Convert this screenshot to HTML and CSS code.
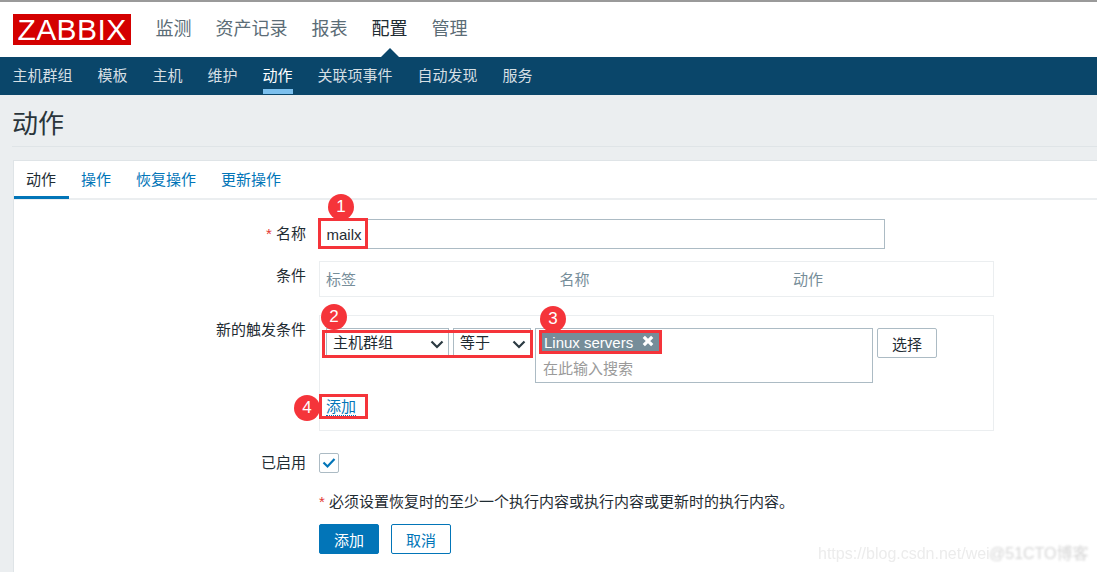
FILE: index.html
```html
<!DOCTYPE html>
<html>
<head>
    <meta charset="utf-8">
    <meta name="viewport" content="width=device-width, initial-scale=1">
    <title>动作</title>
    <link rel="stylesheet" href="styles.css">
</head>
<body>
    <div class="page">
        <header class="topbar">
            <div class="logo">ZABBIX</div>
            <nav class="mainnav">
                <a>监测</a>
                <a>资产记录</a>
                <a>报表</a>
                <a class="current">配置</a>
                <a>管理</a>
            </nav>
        </header>
        <nav class="subnav">
            <a>主机群组</a>
            <a>模板</a>
            <a>主机</a>
            <a>维护</a>
            <a class="current">动作</a>
            <a>关联项事件</a>
            <a>自动发现</a>
            <a>服务</a>
        </nav>
        <main class="content">
            <h1 class="title">动作</h1>
            <section class="card">
                <div class="tabs">
                    <a class="current">动作</a>
                    <a>操作</a>
                    <a>恢复操作</a>
                    <a>更新操作</a>
                </div>
                <form class="form">
                    <div class="row row-name">
                        <label class="label"><span class="req">*</span> 名称</label>
                        <div class="textbox">mailx</div>
                    </div>
                    <div class="row row-cond">
                        <label class="label">条件</label>
                        <div class="condtable">
                            <span>标签</span>
                            <span>名称</span>
                            <span>动作</span>
                        </div>
                    </div>
                    <div class="row row-trigger">
                        <label class="label">新的触发条件</label>
                        <div class="triggerbox">
                            <div class="triggerline">
                                <div class="dropdown dropdown-type">主机群组
                                    <svg class="chev" width="14" height="9" viewBox="0 0 14 9"><path d="M1.500 1.500 7 7l5.500-5.500" fill="none" stroke="#2b3a42" stroke-width="2.200"/></svg>
                                </div>
                                <div class="dropdown dropdown-op">等于
                                    <svg class="chev" width="14" height="9" viewBox="0 0 14 9"><path d="M1.500 1.500 7 7l5.500-5.500" fill="none" stroke="#2b3a42" stroke-width="2.200"/></svg>
                                </div>
                                <div class="multiselect">
                                    <div class="chip">Linux servers
                                        <svg class="chip-x" width="12" height="12" viewBox="0 0 12 12"><path d="M1.800 1.800l8.400 8.400M10.200 1.800 1.800 10.200" stroke="#fff" stroke-width="3.200"/></svg>
                                    </div>
                                    <div class="search">在此输入搜索</div>
                                </div>
                                <button type="button" class="btn-select">选择</button>
                            </div>
                            <a class="addlink">添加</a>
                        </div>
                    </div>
                    <div class="row row-enabled">
                        <label class="label">已启用</label>
                        <div class="checkbox">
                            <svg width="14" height="12" viewBox="0 0 14 12"><path d="M1.500 5.500 5.500 9.500 12.500 2" fill="none" stroke="#0275b8" stroke-width="2.200"/></svg>
                        </div>
                    </div>
                    <div class="row row-note">
                        <span></span>
                        <p class="note"><span class="req">*</span> 必须设置恢复时的至少一个执行内容或执行内容或更新时的执行内容。</p>
                    </div>
                    <div class="row row-buttons">
                        <span></span>
                        <div class="buttons">
                            <button type="button" class="btn-primary">添加</button>
                            <button type="button" class="btn-cancel">取消</button>
                        </div>
                    </div>
                </form>
            </section>
        </main>

        <!-- red marks drawn over the screenshot -->
        <div class="mark mark-box1"></div>
        <div class="mark mark-box2"></div>
        <div class="mark mark-box3"></div>
        <div class="mark mark-box4"></div>
        <div class="dot dot1">1</div>
        <div class="dot dot2">2</div>
        <div class="dot dot3">3</div>
        <div class="dot dot4">4</div>

        <div class="wm wm-csdn">https://blog.csdn.net/wei</div>
        <div class="wm wm-cto">@51CTO博客</div>
    </div>
</body>
</html>
```

FILE: styles.css
```css
* {
    margin: 0;
    padding: 0;
    box-sizing: border-box;
}
html, body {
    height: 100%;
    overflow: hidden;
}
body {
    background-color: #ebeef0;
    color: #1f2c33;
    font-family: "Liberation Sans", "Noto Sans CJK SC", sans-serif;
    font-size: 15px;
}
.page {
    position: relative;
    width: 1097px;
    height: 572px;
    overflow: hidden;
}

/* top */
.topbar {
    height: 57px;
    background-color: #fff;
    border-top: 2px solid #9a9a9a;
    display: flex;
    align-items: flex-start;
    padding-left: 13px;
}
.logo {
    width: 118px;
    height: 31px;
    margin-top: 12px;
    background-color: #d40000;
    color: #fff;
    font-size: 30px;
    line-height: 31px;
    text-align: center;
    letter-spacing: 0.4px;
}
.mainnav {
    display: flex;
    gap: 24px;
    margin-left: 24.500px;
    margin-top: 13px;
    font-size: 18px;
    line-height: 28px;
    color: #5b6c76;
}
.mainnav .current {
    color: #1f2c33;
    position: relative;
}
.mainnav .current::after {
    content: "";
    position: absolute;
    left: 8px;
    top: 33px;
    border-left: 10px solid transparent;
    border-right: 10px solid transparent;
    border-bottom: 10px solid #0a466a;
}
.subnav {
    height: 38px;
    background-color: #0a466a;
    display: flex;
    gap: 25px;
    padding-left: 12.500px;
    font-size: 15px;
    line-height: 37px;
    color: #d5dfe4;
}
.subnav a {
    height: 37px;
}
.subnav .current {
    color: #fff;
    border-bottom: 5px solid #7cc0ee;
}

/* content */
.content {
    padding: 0 0 0 13px;
}
.title {
    height: 52px;
    border-bottom: 1px solid #dfe4e7;
    font-size: 26px;
    font-weight: normal;
    line-height: 58px;
    margin-left: -1px;
    color: #2a353b;
}
.card {
    width: 1100px;
    height: 430px;
    margin-top: 13px;
    background-color: #fff;
    border: 1px solid #dfe4e7;
}
.tabs {
    display: flex;
    height: 39px;
    border-bottom: 2px solid #ebeef0;
    color: #0275b8;
    line-height: 38px;
}
.tabs a {
    height: 38px;
    padding: 0 13px 0 12px;
}
.tabs .current {
    color: #1f2c33;
    border-bottom: 3px solid #0275b8;
}
.form {
    padding-top: 19px;
}
.row {
    display: grid;
    grid-template-columns: 292px 1fr;
    column-gap: 13px;
}
.label {
    text-align: right;
    line-height: 29px;
}
.req {
    color: #e33734;
}
.textbox {
    width: 566px;
    height: 30px;
    border: 1px solid #acbbc4;
    padding-left: 6.500px;
    line-height: 29px;
}
.row-cond {
    margin-top: 12px;
}
.row-cond .label {
    line-height: 30px;
}
.condtable {
    width: 675px;
    height: 36px;
    border: 1px solid #ebeef0;
    display: grid;
    grid-template-columns: 233.500px 233.500px 1fr;
    padding-left: 6px;
    line-height: 36px;
    color: #768d99;
}
.row-trigger {
    margin-top: 18px;
}
.row-trigger .label {
    line-height: 30px;
}
.triggerbox {
    width: 675px;
    height: 116px;
    border: 1px solid #ebeef0;
    padding: 12px 0 0 6px;
}
.triggerline {
    display: flex;
    align-items: flex-start;
    gap: 4px;
}
.dropdown {
    height: 28px;
    border: 1px solid #acbbc4;
    padding-left: 6px;
    line-height: 28px;
    position: relative;
}
.dropdown-type {
    width: 123px;
}
.dropdown-op {
    width: 78px;
}
.chev {
    position: absolute;
    right: 4px;
    top: 11px;
}
.multiselect {
    width: 338px;
    height: 55px;
    border: 1px solid #acbbc4;
}
.chip {
    width: 118px;
    height: 20px;
    margin: 4px 0 0 5px;
    background-color: #768d99;
    color: #fff;
    line-height: 19px;
    padding-left: 3px;
    position: relative;
    white-space: nowrap;
}
.chip-x {
    position: absolute;
    right: 5px;
    top: 2px;
}
.search {
    color: #9a9a9a;
    line-height: 20px;
    padding-left: 7px;
    margin-top: 6px;
}
.btn-select {
    width: 60px;
    height: 30px;
    background-color: #fff;
    border: 1px solid #acbbc4;
    border-radius: 2px;
    font: inherit;
    color: #1f2c33;
}
.addlink {
    display: inline-block;
    margin: 14px 0 0 0;
    height: 19px;
    line-height: 20px;
    color: #0275b8;
    border-bottom: 1px dotted #0275b8;
}
.row-enabled {
    margin-top: 22px;
}
.row-enabled .label {
    line-height: 20px;
}
.checkbox {
    width: 20px;
    height: 20px;
    border: 1px solid #acbbc4;
    border-radius: 2px;
    display: flex;
    align-items: center;
    justify-content: center;
}
.row-note {
    margin-top: 18px;
}
.note {
    line-height: 22px;
}
.row-buttons {
    margin-top: 11px;
}
.buttons {
    display: flex;
    gap: 12px;
}
.buttons button {
    width: 60px;
    height: 30px;
    border-radius: 2px;
    font: inherit;
    border: 1px solid #0275b8;
}
.btn-primary {
    background-color: #0275b8;
    color: #fff;
}
.btn-cancel {
    background-color: #fff;
    color: #0275b8;
}

/* red marks */
.mark {
    position: absolute;
    border: 3px solid #f5343a;
}
.mark-box1 { left: 318px; top: 218px; width: 50px; height: 31px; }
.mark-box2 { left: 322px; top: 330px; width: 211px; height: 28px; }
.mark-box3 { left: 539px; top: 330px; width: 123px; height: 24px; }
.mark-box4 { left: 319px; top: 394px; width: 49px; height: 25px; }
.dot {
    position: absolute;
    width: 26px;
    height: 26px;
    border-radius: 50%;
    background-color: #f5343a;
    color: #fff;
    font-size: 17px;
    line-height: 25px;
    text-align: center;
}
.dot1 { left: 328px; top: 194px; }
.dot2 { left: 321px; top: 304px; }
.dot3 { left: 540px; top: 306px; }
.dot4 { left: 294px; top: 395px; }

/* watermarks */
.wm {
    position: absolute;
    top: 544px;
    font-size: 16px;
    line-height: 20px;
    white-space: nowrap;
}
.wm-csdn {
    left: 818px;
    color: #ececec;
    filter: blur(0.4px);
}
.wm-cto {
    left: 989px;
    color: #d6d6d6;
    filter: blur(0.8px);
}
```
